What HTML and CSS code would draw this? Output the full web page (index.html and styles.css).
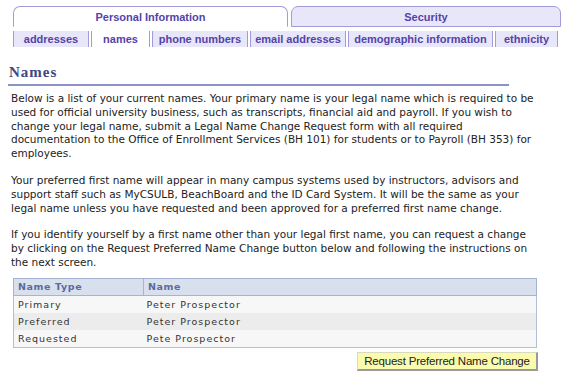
FILE: index.html
```html
<!DOCTYPE html>
<html>
<head>
<meta charset="utf-8">
<link rel="stylesheet" href="styles.css">
</head>
<body>
<div class="page">
  <div class="main-tabs">
    <div class="main-tab active">Personal Information</div>
    <div class="main-tab">Security</div>
  </div>
  <div class="sub-tabs">
    <div class="sub-tab w-addr">addresses</div>
    <div class="sub-tab active w-names">names</div>
    <div class="sub-tab w-phone">phone numbers</div>
    <div class="sub-tab w-email">email addresses</div>
    <div class="sub-tab w-demo">demographic information</div>
    <div class="sub-tab w-eth">ethnicity</div>
  </div>
  <h1 class="title">Names</h1>
  <div class="content">
    <p>Below is a list of your current names. Your primary name is your legal name which is required to be used for official university business, such as transcripts, financial aid and payroll. If you wish to change your legal name, submit a Legal Name Change Request form with all required documentation to the Office of Enrollment Services (BH 101) for students or to Payroll (BH 353) for employees.</p>
    <p>Your preferred first name will appear in many campus systems used by instructors, advisors and support staff such as MyCSULB, BeachBoard and the ID Card System. It will be the same as your legal name unless you have requested and been approved for a preferred first name change.</p>
    <p>If you identify yourself by a first name other than your legal first name, you can request a change by clicking on the Request Preferred Name Change button below and following the instructions on the next screen.</p>
  </div>
  <table class="names">
    <thead>
      <tr><th class="c1">Name Type</th><th>Name</th></tr>
    </thead>
    <tbody>
      <tr class="odd"><td>Primary</td><td>Peter Prospector</td></tr>
      <tr class="even"><td>Preferred</td><td>Peter Prospector</td></tr>
      <tr class="odd"><td>Requested</td><td>Pete Prospector</td></tr>
    </tbody>
  </table>
  <div class="actions">
    <button class="btn">Request Preferred Name Change</button>
  </div>
</div>
</body>
</html>
```
FILE: styles.css
```css
html, body {
  margin: 0;
  padding: 0;
  background: #ffffff;
}
.page {
  width: 575px;
  height: 380px;
  overflow: hidden;
}
.main-tabs {
  display: flex;
  margin: 6px 0 0 13px;
  gap: 3px;
}
.main-tab {
  box-sizing: border-box;
  height: 21px;
  width: 275px;
  border: 1px solid #a39ad9;
  border-radius: 7px 7px 0 0;
  background: #e8e6f9;
  color: #5443a8;
  font: bold 11px "Liberation Sans", Arial, sans-serif;
  text-align: center;
  line-height: 20px;
}
.main-tab.active {
  background: #ffffff;
  border-bottom-color: #ffffff;
}
.main-tab + .main-tab {
  width: 270px;
}
.sub-tabs {
  display: flex;
  gap: 2px;
  margin: 4px 0 0 13px;
}
.sub-tab {
  box-sizing: border-box;
  height: 16px;
  border-left: 1px solid #a39ad9;
  border-right: 1px solid #a39ad9;
  background: #e8e6f9;
  color: #5443a8;
  font: bold 11px "Liberation Sans", Arial, sans-serif;
  text-align: center;
  line-height: 16px;
}
.sub-tab.active {
  background: #ffffff;
}
.w-addr { width: 76px; }
.w-names { width: 59px; }
.w-phone { width: 96px; }
.w-email { width: 96px; }
.w-demo { width: 145px; }
.w-eth { width: 63px; }
.title {
  margin: 17px 0 0 8px;
  width: 500px;
  padding: 0 0 4px 1px;
  border-bottom: 2px solid #8c92c6;
  font: bold 15px "Liberation Serif", "Times New Roman", serif;
  letter-spacing: 1px;
  color: #3e4880;
  line-height: 16px;
}
.content {
  margin: 6px 0 0 11px;
  width: 530px;
  font: 10.5px "DejaVu Sans", Verdana, sans-serif;
  line-height: 13.8px;
  color: #222222;
}
.content p {
  margin: 0 0 13px 0;
}
.content p:last-child {
  margin-bottom: 0;
}
.names {
  margin: 8px 0 0 13px;
  width: 524px;
  border-collapse: collapse;
  border: 1px solid #b4bfd6;
  font: 9.5px "DejaVu Sans", Verdana, sans-serif;
  letter-spacing: 1px;
  color: #333333;
}
.names th {
  background: #d9e0ed;
  border: 1px solid #a5b4d3;
  color: #5b6b9c;
  font-weight: bold;
  letter-spacing: 0.6px;
  text-align: left;
  height: 16px;
  padding: 0 0 0 4px;
}
.names th.c1 {
  width: 125px;
}
.names td {
  height: 17px;
  padding: 0 0 0 4px;
}
.names td + td {
  padding-left: 3px;
}
.odd td { background: #f7f7f7; }
.even td { background: #ececec; }
.actions {
  display: flex;
  justify-content: flex-end;
  width: 538px;
  margin-top: 4px;
}
.btn {
  box-sizing: border-box;
  height: 19px;
  width: 181px;
  padding: 0;
  white-space: nowrap;
  background: #fbfbad;
  border: 1px solid #d9d9c0;
  border-right: 2px solid #9a9a9a;
  border-bottom: 2px solid #9a9a9a;
  font: 11.5px "Liberation Sans", Arial, sans-serif;
  letter-spacing: -0.2px;
  color: #222222;
}
```
